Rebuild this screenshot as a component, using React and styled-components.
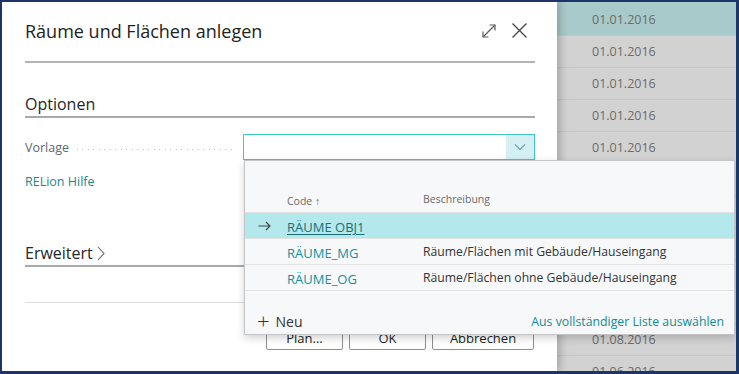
import React from 'react'
import styled, { createGlobalStyle } from 'styled-components'

const GlobalStyle = createGlobalStyle`
html, body {
  margin: 0;
  padding: 0;
  background: #ffffff;
  font-family: "Open Sans", "Noto Sans", Arial, sans-serif;
}
* { box-sizing: border-box; }
`

const dates = [
  '01.01.2016', '01.01.2016', '01.01.2016', '01.01.2016', '01.01.2016',
  '01.01.2016', '01.01.2016', '01.01.2016', '01.01.2016', '01.01.2016',
  '01.08.2016', '01.06.2016',
]

const entries = [
  { code: 'RÄUME OBJ1', text: '', selected: true },
  { code: 'RÄUME_MG', text: 'Räume/Flächen mit Gebäude/Hauseingang' },
  { code: 'RÄUME_OG', text: 'Räume/Flächen ohne Gebäude/Hauseingang' },
]

function ExpandIcon() {
  return (
    <svg width="16" height="16" viewBox="0 0 16 16" fill="none" stroke="#5a5a5a" strokeWidth="1.2">
      <path d="M2 14 L14 2" />
      <path d="M8.5 2 H14 V7.5" />
      <path d="M2 8.5 V14 H7.5" />
    </svg>
  )
}

function CloseIcon() {
  return (
    <svg width="17" height="17" viewBox="0 0 17 17" fill="none" stroke="#4a4a4a" strokeWidth="1.4">
      <path d="M1.5 1.5 L15.5 15.5 M15.5 1.5 L1.5 15.5" />
    </svg>
  )
}

function Chevron({ color = '#5aa7ad' }) {
  return (
    <svg width="12" height="8" viewBox="0 0 12 8" fill="none" stroke={color} strokeWidth="1.1">
      <path d="M1 1.5 L6 6.5 L11 1.5" />
    </svg>
  )
}

function ChevronRight() {
  return (
    <svg width="8" height="15" viewBox="0 0 8 15" fill="none" stroke="#666" strokeWidth="1.1">
      <path d="M1 1 L7 7.5 L1 14" />
    </svg>
  )
}

function RowArrow() {
  return (
    <svg width="13" height="10" viewBox="0 0 13 10" fill="none" stroke="#444" strokeWidth="1.1">
      <path d="M0.5 5 H12 M8 1 L12 5 L8 9" />
    </svg>
  )
}

function App() {
  return (
    <>
      <GlobalStyle />
      <Frame>
        <Dialog>
          <Header>
            <Title>Räume und Flächen anlegen</Title>
            <HeaderActions>
              <ExpandIcon />
              <CloseIcon />
            </HeaderActions>
          </Header>

          <SectionTitle top={29}>Optionen</SectionTitle>

          <FieldRow>
            <Label>
              Vorlage
              <Leader />
            </Label>
            <Input>
              <DropButton>
                <Chevron />
              </DropButton>
            </Input>
          </FieldRow>

          <HelpLink>RELion Hilfe</HelpLink>

          <SectionTitle top={50}>
            Erweitert
            <ChevronGap>
              <ChevronRight />
            </ChevronGap>
          </SectionTitle>

          <Rule />

          <ButtonRow>
            <Button width={77}>Plan...</Button>
            <Button width={77}>OK</Button>
            <Button width={102}>Abbrechen</Button>
          </ButtonRow>
        </Dialog>

        <DateList>
          {dates.map((d, i) => (
            <DateRow key={i} first={i === 0}>{d}</DateRow>
          ))}
        </DateList>

        <Popup>
          <PopupHead>
            <ArrowCell />
            <CodeCell>
              <HeadText>Code ↑</HeadText>
            </CodeCell>
            <HeadText>Beschreibung</HeadText>
          </PopupHead>
          {entries.map((e) => (
            <EntryRow key={e.code} selected={e.selected}>
              <ArrowCell>{e.selected ? <RowArrow /> : null}</ArrowCell>
              <CodeCell>
                <Code selected={e.selected}>{e.code}</Code>
              </CodeCell>
              <Desc>{e.text}</Desc>
            </EntryRow>
          ))}
          <PopupFooter>
            <NewAction>
              <Plus>+</Plus>
              Neu
            </NewAction>
            <FullList>Aus vollständiger Liste auswählen</FullList>
          </PopupFooter>
        </Popup>
      </Frame>
    </>
  )
}

export default App

const Frame = styled.div`
position: relative;
width: 739px;
height: 374px;
display: flex;
border-style: solid;
border-color: #1d3566;
border-width: 2px 3px 3px 2px;
overflow: hidden;
`

const Dialog = styled.div`
position: relative;
z-index: 1;
width: 555px;
flex-shrink: 0;
background: #ffffff;
padding: 0 22px 0 23px;
display: flex;
flex-direction: column;
box-shadow: 3px 0 8px rgba(0, 0, 0, 0.22);
`

const Header = styled.div`
height: 61px;
display: flex;
align-items: center;
justify-content: space-between;
border-bottom: 2px solid #b5b5b5;
`

const Title = styled.div`
font-size: 18px;
color: #222;
padding-bottom: 1px;
`

const HeaderActions = styled.div`
display: flex;
align-items: center;
gap: 14px;
padding-right: 7px;
padding-bottom: 2px;
`

const SectionTitle = styled.div`
margin-top: ${(p) => p.top}px;
height: 26px;
line-height: 22px;
font-size: 16px;
font-weight: 500;
color: #262626;
display: flex;
align-items: center;
border-bottom: 2px solid #a9a9a9;
`

const ChevronGap = styled.span`
display: inline-flex;
margin-left: 4px;
`

const FieldRow = styled.div`
margin-top: 16px;
height: 26px;
display: flex;
align-items: center;
`

const Label = styled.div`
width: 218px;
display: flex;
align-items: center;
font-size: 12.5px;
color: #5e6773;
`

const Leader = styled.div`
flex: 1;
height: 1px;
margin: 4px 8px 0 8px;
background-image: repeating-linear-gradient(to right, #c2c2c2 0 1px, transparent 1px 5.5px);
`

const Input = styled.div`
flex: 1;
height: 26px;
border: 1px solid #3fc5ce;
display: flex;
justify-content: flex-end;
`

const DropButton = styled.div`
width: 28px;
height: 100%;
background: #d6eff2;
display: flex;
align-items: center;
justify-content: center;
`

const HelpLink = styled.div`
margin-top: 13px;
font-size: 12.5px;
line-height: 18px;
color: #138a92;
`

const Rule = styled.div`
margin-top: 35px;
border-top: 1px solid #dedede;
`

const ButtonRow = styled.div`
margin-top: 18px;
display: flex;
justify-content: flex-end;
gap: 6px;
padding-right: 1px;
`

const Button = styled.div`
width: ${(p) => p.width}px;
height: 29px;
padding-top: 4px;
border: 1px solid #8f8f8f;
border-radius: 2px;
background: #ffffff;
display: flex;
align-items: center;
justify-content: center;
font-size: 13px;
color: #222;
`

const DateList = styled.div`
flex: 1;
background: #d2d2d2;
`

const DateRow = styled.div`
height: ${(p) => (p.first ? 34 : 32)}px;
padding-left: 35px;
padding-top: ${(p) => (p.first ? 2 : 0)}px;
display: flex;
align-items: center;
font-size: 12.5px;
color: #6b6b6b;
background: ${(p) => (p.first ? '#a9caca' : 'transparent')};
border-bottom: 1px solid #c5c5c5;
`

const Popup = styled.div`
position: absolute;
z-index: 2;
left: 242px;
top: 158px;
width: 491px;
height: 175px;
background: #f7f8fa;
border: 1px solid #c4c4c4;
box-shadow: 0 3px 8px rgba(0, 0, 0, 0.18);
padding-top: 24px;
display: flex;
flex-direction: column;
`

const PopupHead = styled.div`
height: 28px;
display: flex;
align-items: center;
border-bottom: 1px solid #e2e2e2;
`

const HeadText = styled.span`
font-size: 10.5px;
color: #6a6a6a;
`

const ArrowCell = styled.div`
width: 42px;
padding-left: 13px;
display: flex;
align-items: center;
`

const CodeCell = styled.div`
width: 136px;
`

const EntryRow = styled.div`
height: 26px;
display: flex;
align-items: center;
background: ${(p) => (p.selected ? '#b3e8ec' : 'transparent')};
border-bottom: 1px solid #e2e2e2;
`

const Code = styled.span`
font-size: 13px;
color: ${(p) => (p.selected ? '#1b6f76' : '#169099')};
text-decoration: ${(p) => (p.selected ? 'underline' : 'none')};
text-underline-offset: 2px;
`

const Desc = styled.span`
font-size: 12.2px;
color: #333;
`

const PopupFooter = styled.div`
margin-top: auto;
height: 26px;
padding: 0 10px 0 12px;
display: flex;
align-items: center;
justify-content: space-between;
`

const NewAction = styled.div`
display: flex;
align-items: center;
font-size: 14px;
color: #333;
`

const Plus = styled.span`
font-size: 22px;
font-weight: 300;
line-height: 1;
margin-right: 6px;
margin-top: -3px;
`

const FullList = styled.div`
font-size: 12.3px;
color: #138a92;
`
